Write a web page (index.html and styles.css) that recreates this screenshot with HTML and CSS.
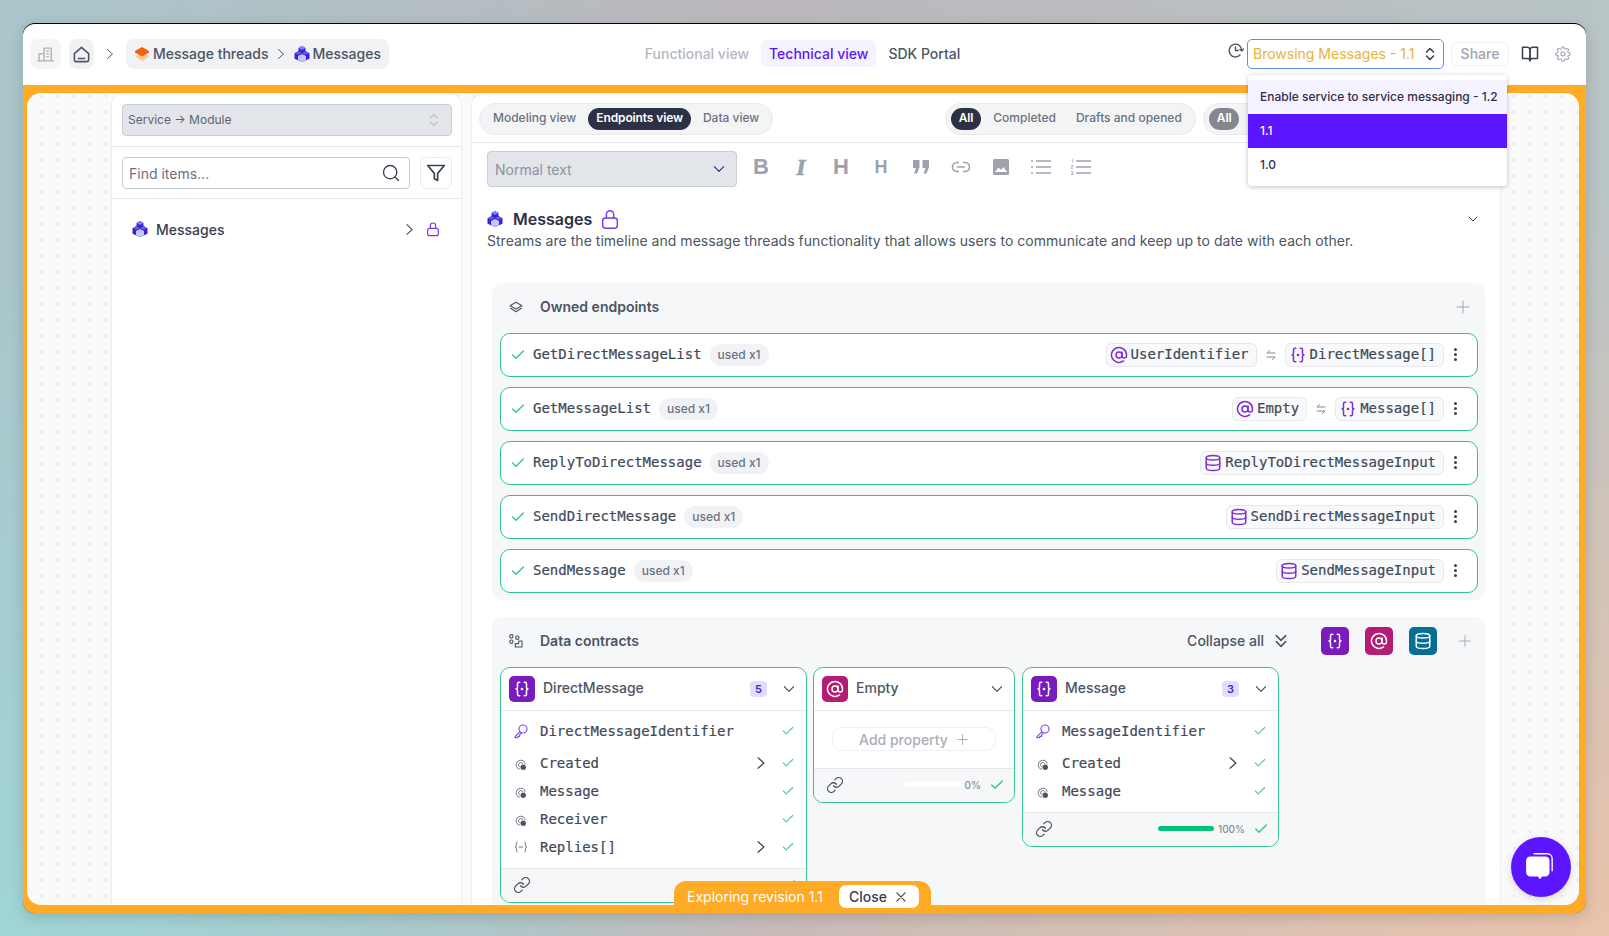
FILE: index.html
```html
<!DOCTYPE html>
<html lang="en">

<head>
    <meta charset="UTF-8">
    <meta name="viewport" content="width=device-width, initial-scale=1.0">
    <title>Messages - Technical view</title>
    <link rel="stylesheet" href="styles.css">
</head>

<body>
    <svg class="sprites" aria-hidden="true">
        <symbol id="i-cube" viewBox="0 0 16 16">
            <polygon points="8,0 11.500,2 11.500,5 15.500,7.300 15.500,12.800 8,16 .5,12.800 .5,7.300 4.500,5 4.500,2" fill="#3d1fd6"/>
            <polygon points="8,0 11.500,2 8,4 4.500,2" fill="#7c83f5"/>
            <polygon points="4.500,5.200 8,7 4.500,8.800 1,7.200" fill="#5f5cf0"/>
            <polygon points="11.500,5.200 15,7.200 11.500,8.800 8,7" fill="#5f5cf0"/>
            <polygon points="8,8 12,10 12,14 8,16 4,14 4,10" fill="#c3c6fb"/>
        </symbol>
        <symbol id="i-layers-o" viewBox="0 0 16 16">
            <polygon points="8,7 15,10.500 8,15 1,10.500" fill="#fdc68a"/>
            <polygon points="8,1 15,5 15,6.500 8,10.500 1,6.500 1,5" fill="#f4610f"/>
        </symbol>
        <symbol id="i-check" viewBox="0 0 24 24"><polyline points="20 6 9 17 4 12"/></symbol>
        <symbol id="i-right" viewBox="0 0 24 24"><polyline points="7 3 17 12 7 21"/></symbol>
        <symbol id="i-down" viewBox="0 0 24 24"><polyline points="4 8 12 16 20 8"/></symbol>
        <symbol id="i-lock" viewBox="0 0 24 24">
            <rect x="4" y="11" width="16" height="11" rx="3"/><path d="M8 11V7a4 4 0 0 1 8 0v4"/>
        </symbol>
        <symbol id="i-at" viewBox="0 0 24 24">
            <circle cx="12" cy="12" r="4"/><path d="M16 8v5a3 3 0 0 0 6 0v-1a10 10 0 1 0-3.920 7.940"/>
        </symbol>
        <symbol id="i-db" viewBox="0 0 24 24">
            <ellipse cx="12" cy="5" rx="9" ry="3"/><path d="M21 12c0 1.660-4 3-9 3s-9-1.340-9-3"/>
            <path d="M3 5v14c0 1.660 4 3 9 3s9-1.340 9-3V5"/>
        </symbol>
        <symbol id="i-braces" viewBox="0 0 24 24">
            <path d="M9 3H8a2 2 0 0 0-2 2v5a2 2 0 0 1-2 2 2 2 0 0 1 2 2v5a2 2 0 0 0 2 2h1"/>
            <path d="M15 3h1a2 2 0 0 1 2 2v5a2 2 0 0 0 2 2 2 2 0 0 0-2 2v5a2 2 0 0 1-2 2h-1"/>
            <circle cx="12" cy="12" r=".8"/>
        </symbol>
        <symbol id="i-link" viewBox="0 0 24 24">
            <path d="M10 13a5 5 0 0 0 7.540.54l3-3a5 5 0 0 0-7.070-7.070l-1.720 1.710"/>
            <path d="M14 11a5 5 0 0 0-7.540-.54l-3 3a5 5 0 0 0 7.070 7.070l1.710-1.710"/>
        </symbol>
        <symbol id="i-key" viewBox="0 0 24 24">
            <circle cx="15" cy="9" r="6"/><path d="M10.500 13 3 20.500V22h3.500l1-2H10v-2.500l2.500-2.500"/>
        </symbol>
        <symbol id="i-attr" viewBox="0 0 16 16">
            <path d="M13.500 6.500A6 6 0 1 0 6.500 13.600" fill="none" stroke="#6b7280" stroke-width="1.300"/>
            <path d="M10.500 6.500A3 3 0 1 0 6.500 10.500" fill="none" stroke="#6b7280" stroke-width="1.300"/>
            <circle cx="11" cy="11" r="3.600" fill="#4b5563"/>
        </symbol>
        <symbol id="i-list" viewBox="0 0 16 16">
            <path d="M4.500 2.500H4a1.300 1.300 0 0 0-1.300 1.300V6.500A1.500 1.500 0 0 1 1.300 8a1.500 1.500 0 0 1 1.400 1.500v2.700A1.300 1.300 0 0 0 4 13.500h.5" fill="none" stroke="#6b7280" stroke-width="1.100"/>
            <path d="M11.500 2.500h.5a1.300 1.300 0 0 1 1.300 1.300V6.500A1.500 1.500 0 0 0 14.700 8a1.500 1.500 0 0 0-1.400 1.500v2.700a1.300 1.300 0 0 1-1.300 1.300h-.5" fill="none" stroke="#6b7280" stroke-width="1.100"/>
            <path d="M5.500 8h5" stroke="#6b7280" stroke-width="1.100"/>
        </symbol>
        <symbol id="i-plus" viewBox="0 0 24 24"><path d="M12 3v18M3 12h18"/></symbol>
        <symbol id="i-swap" viewBox="0 0 24 24"><path d="M20 8H4l5-5M4 16h16l-5 5"/></symbol>
    </svg>

    <div class="window">
        <header class="topbar">
            <div class="crumbs">
                <span class="icon-btn org">
                    <svg class="ic" viewBox="0 0 24 24" width="17" height="17"><path d="M3 21V11h7v10M10 21V3h10v18M1 21h22M14 7h2M14 11h2M14 15h2"/></svg>
                </span>
                <span class="icon-btn home">
                    <svg class="ic" viewBox="0 0 24 24" width="19" height="19"><path d="M3 11 12 3l9 8v8a2 2 0 0 1-2 2H5a2 2 0 0 1-2-2z"/><path d="M8 17h8"/></svg>
                </span>
                <svg class="ic crumb-sep"><use href="#i-right"/></svg>
                <div class="crumb-pill">
                    <svg class="pic" width="16" height="16"><use href="#i-layers-o"/></svg>
                    <span class="crumb-text">Message threads</span>
                    <svg class="ic inner-sep"><use href="#i-right"/></svg>
                    <svg class="pic" width="16" height="16"><use href="#i-cube"/></svg>
                    <span class="crumb-text">Messages</span>
                </div>
            </div>

            <nav class="tabs">
                <span class="tab muted">Functional view</span>
                <span class="tab active">Technical view</span>
                <span class="tab">SDK Portal</span>
            </nav>

            <div class="actions">
                <svg class="ic history" viewBox="0 0 24 24" width="17" height="17"><path d="M21 12a9 9 0 1 0-2.600 6.400"/><path d="M12 7v5h4"/><path d="m23 10-2 2.500-2.500-2"/></svg>
                <div class="version">
                    <div class="version-select">
                        <span class="version-text">Browsing Messages - 1.1</span>
                        <svg class="updown" viewBox="0 0 10 16" width="10" height="16"><path d="M1.500 6 5 2.500 8.500 6M1.500 10 5 13.500 8.500 10"/></svg>
                    </div>
                    <ul class="version-menu">
                        <li class="hovered">Enable service to service messaging - 1.2</li>
                        <li class="selected">1.1</li>
                        <li>1.0</li>
                    </ul>
                </div>
                <span class="share">Share</span>
                <svg class="ic book" viewBox="0 0 24 24" width="18" height="18"><path d="M2 3h6a4 4 0 0 1 4 4v14a3 3 0 0 0-3-3H2z"/><path d="M22 3h-6a4 4 0 0 0-4 4v14a3 3 0 0 1 3-3h7z"/></svg>
                <svg class="ic gear" viewBox="0 0 24 24" width="16" height="16"><circle cx="12" cy="12" r="3"/><path d="M19.400 15a1.650 1.650 0 0 0 .33 1.820l.06.06a2 2 0 0 1 0 2.830 2 2 0 0 1-2.830 0l-.06-.06a1.650 1.650 0 0 0-1.820-.33 1.650 1.650 0 0 0-1 1.510V21a2 2 0 0 1-2 2 2 2 0 0 1-2-2v-.09A1.650 1.650 0 0 0 9 19.400a1.650 1.650 0 0 0-1.820.33l-.06.06a2 2 0 0 1-2.830 0 2 2 0 0 1 0-2.830l.06-.06a1.650 1.650 0 0 0 .33-1.820 1.650 1.650 0 0 0-1.510-1H3a2 2 0 0 1-2-2 2 2 0 0 1 2-2h.09A1.650 1.650 0 0 0 4.600 9a1.650 1.650 0 0 0-.33-1.820l-.06-.06a2 2 0 0 1 0-2.830 2 2 0 0 1 2.830 0l.06.06a1.650 1.650 0 0 0 1.820.33H9a1.650 1.650 0 0 0 1-1.510V3a2 2 0 0 1 2-2 2 2 0 0 1 2 2v.09a1.650 1.650 0 0 0 1 1.510 1.650 1.650 0 0 0 1.820-.33l.06-.06a2 2 0 0 1 2.830 0 2 2 0 0 1 0 2.830l-.06.06a1.650 1.650 0 0 0-.33 1.820V9a1.650 1.650 0 0 0 1.510 1H21a2 2 0 0 1 2 2 2 2 0 0 1-2 2h-.09a1.650 1.650 0 0 0-1.510 1z"/></svg>
            </div>
        </header>

        <div class="frame">
            <div class="canvas">
                <aside class="sidebar">
                    <div class="side-block">
                        <div class="side-select">
                            <span class="side-select-text">Service → Module</span>
                            <svg class="updown faint" viewBox="0 0 10 16" width="10" height="16"><path d="M1.500 6 5 2.500 8.500 6M1.500 10 5 13.500 8.500 10"/></svg>
                        </div>
                    </div>
                    <div class="side-block search-block">
                        <div class="search">
                            <span>Find items...</span>
                            <svg class="ic" viewBox="0 0 24 24" width="20" height="20"><circle cx="11" cy="11" r="8"/><path d="m21 21-4.300-4.300"/></svg>
                        </div>
                        <span class="filter-btn">
                            <svg class="ic" viewBox="0 0 24 24" width="20" height="20"><polygon points="22 3 2 3 10 12.460 10 19 14 21 14 12.460 22 3"/></svg>
                        </span>
                    </div>
                    <div class="side-item">
                        <svg class="pic" width="16" height="16"><use href="#i-cube"/></svg>
                        <span class="side-name">Messages</span>
                        <svg class="ic side-chev"><use href="#i-right"/></svg>
                        <svg class="ic side-lock"><use href="#i-lock"/></svg>
                    </div>
                </aside>

                <main class="main">
                    <div class="view-bar">
                        <div class="seg">
                            <span>Modeling view</span>
                            <span class="on">Endpoints view</span>
                            <span>Data view</span>
                        </div>
                        <div class="seg push">
                            <span class="on">All</span>
                            <span>Completed</span>
                            <span>Drafts and opened</span>
                        </div>
                        <div class="seg">
                            <span class="on grey">All</span>
                            <span>Completed</span>
                            <span>Drafts and opened</span>
                        </div>
                    </div>

                    <div class="toolbar">
                        <div class="format-select">
                            <span>Normal text</span>
                            <svg class="ic"><use href="#i-down"/></svg>
                        </div>
                        <span class="tool tb">B</span>
                        <span class="tool tb slant">I</span>
                        <span class="tool tb">H</span>
                        <span class="tool tb h2">H</span>
                        <span class="tool">
                            <svg viewBox="0 0 18 14" width="18" height="14" fill="#9ca3af"><path d="M1 0h6.500v7L5 13.500H2L4 8H1zM10.500 0H17v7l-2.500 6.500h-3L13.500 8h-3z"/></svg>
                        </span>
                        <span class="tool">
                            <svg class="tool-stroke" viewBox="0 0 20 12" width="20" height="12"><path d="M8 1.500H6a4.500 4.500 0 0 0 0 9h2M12 1.500h2a4.500 4.500 0 0 1 0 9h-2M6 6h8"/></svg>
                        </span>
                        <span class="tool">
                            <svg viewBox="0 0 16 16" width="16" height="16"><rect width="16" height="16" rx="1.500" fill="#9ca3af"/><path d="m2 13 3.500-4.500L8 11l2.500-3 3.500 5z" fill="#fff"/></svg>
                        </span>
                        <span class="tool">
                            <svg class="tool-stroke" viewBox="0 0 20 16" width="20" height="16"><path d="M5 2h15M5 8h15M5 14h15M0 2h2M0 8h2M0 14h2"/></svg>
                        </span>
                        <span class="tool">
                            <svg class="tool-stroke" viewBox="0 0 20 16" width="20" height="16"><path d="M5 2h15M5 8h15M5 14h15"/><path class="tiny" d="M.5 1 1.500.5v3M0 6.500h2v1.500H0v1.500h2M0 12.500h2v1.500H.5M2 14v1.500H0"/></svg>
                        </span>
                    </div>

                    <div class="intro">
                        <div class="intro-head">
                            <svg class="pic" width="16" height="16"><use href="#i-cube"/></svg>
                            <h2>Messages</h2>
                            <svg class="ic intro-lock"><use href="#i-lock"/></svg>
                            <svg class="ic intro-chev"><use href="#i-down"/></svg>
                        </div>
                        <p>Streams are the timeline and message threads functionality that allows users to communicate and keep up to date with each other.</p>
                    </div>

                    <section class="panel">
                        <div class="panel-head">
                            <svg class="ic panel-icon" viewBox="0 0 24 24" width="16" height="16"><path d="m12 5 9 5-9 5-9-5z"/><path d="m4 14 8 5 8-5"/></svg>
                            <h3>Owned endpoints</h3>
                            <svg class="ic panel-plus"><use href="#i-plus"/></svg>
                        </div>
                        <div class="endpoints">
                            <div class="endpoint">
                                <svg class="ic ok"><use href="#i-check"/></svg>
                                <span class="mono">GetDirectMessageList</span>
                                <span class="used">used x1</span>
                                <span class="chip push-chip"><svg class="ic chip-ic"><use href="#i-at"/></svg><span class="mono">UserIdentifier</span></span>
                                <svg class="ic swap"><use href="#i-swap"/></svg>
                                <span class="chip"><svg class="ic chip-ic"><use href="#i-braces"/></svg><span class="mono">DirectMessage[]</span></span>
                                <span class="kebab"><i></i><i></i><i></i></span>
                            </div>
                            <div class="endpoint">
                                <svg class="ic ok"><use href="#i-check"/></svg>
                                <span class="mono">GetMessageList</span>
                                <span class="used">used x1</span>
                                <span class="chip push-chip"><svg class="ic chip-ic"><use href="#i-at"/></svg><span class="mono">Empty</span></span>
                                <svg class="ic swap"><use href="#i-swap"/></svg>
                                <span class="chip"><svg class="ic chip-ic"><use href="#i-braces"/></svg><span class="mono">Message[]</span></span>
                                <span class="kebab"><i></i><i></i><i></i></span>
                            </div>
                            <div class="endpoint">
                                <svg class="ic ok"><use href="#i-check"/></svg>
                                <span class="mono">ReplyToDirectMessage</span>
                                <span class="used">used x1</span>
                                <span class="chip push-chip"><svg class="ic chip-ic"><use href="#i-db"/></svg><span class="mono">ReplyToDirectMessageInput</span></span>
                                <span class="kebab"><i></i><i></i><i></i></span>
                            </div>
                            <div class="endpoint">
                                <svg class="ic ok"><use href="#i-check"/></svg>
                                <span class="mono">SendDirectMessage</span>
                                <span class="used">used x1</span>
                                <span class="chip push-chip"><svg class="ic chip-ic"><use href="#i-db"/></svg><span class="mono">SendDirectMessageInput</span></span>
                                <span class="kebab"><i></i><i></i><i></i></span>
                            </div>
                            <div class="endpoint">
                                <svg class="ic ok"><use href="#i-check"/></svg>
                                <span class="mono">SendMessage</span>
                                <span class="used">used x1</span>
                                <span class="chip push-chip"><svg class="ic chip-ic"><use href="#i-db"/></svg><span class="mono">SendMessageInput</span></span>
                                <span class="kebab"><i></i><i></i><i></i></span>
                            </div>
                        </div>
                    </section>

                    <section class="panel contracts">
                        <div class="panel-head">
                            <svg class="ic panel-icon" viewBox="0 0 24 24" width="16" height="16"><circle cx="5" cy="5" r="2.500"/><circle cx="5" cy="13" r="2.500"/><circle cx="14" cy="7" r="2.500"/><path d="M11 21v-5h5v-4h5v9z"/></svg>
                            <h3>Data contracts</h3>
                            <span class="collapse-all">Collapse all</span>
                            <svg class="ic collapse-ic" viewBox="0 0 24 24" width="16" height="16"><path d="m5 4 7 7 7-7M5 13l7 7 7-7"/></svg>
                            <span class="type-btn purple"><svg class="ic"><use href="#i-braces"/></svg></span>
                            <span class="type-btn magenta"><svg class="ic"><use href="#i-at"/></svg></span>
                            <span class="type-btn teal"><svg class="ic"><use href="#i-db"/></svg></span>
                            <svg class="ic panel-plus small"><use href="#i-plus"/></svg>
                        </div>

                        <div class="cards">
                            <article class="card wide">
                                <div class="card-head">
                                    <span class="type-btn purple"><svg class="ic"><use href="#i-braces"/></svg></span>
                                    <span class="card-title">DirectMessage</span>
                                    <span class="count">5</span>
                                    <svg class="ic card-chev"><use href="#i-down"/></svg>
                                </div>
                                <div class="card-body">
                                    <div class="prop first"><svg class="ic key"><use href="#i-key"/></svg><span class="mono">DirectMessageIdentifier</span><svg class="ic prop-ok"><use href="#i-check"/></svg></div>
                                    <div class="prop"><svg class="attr"><use href="#i-attr"/></svg><span class="mono">Created</span><svg class="ic prop-chev"><use href="#i-right"/></svg><svg class="ic prop-ok"><use href="#i-check"/></svg></div>
                                    <div class="prop"><svg class="attr"><use href="#i-attr"/></svg><span class="mono">Message</span><svg class="ic prop-ok"><use href="#i-check"/></svg></div>
                                    <div class="prop"><svg class="attr"><use href="#i-attr"/></svg><span class="mono">Receiver</span><svg class="ic prop-ok"><use href="#i-check"/></svg></div>
                                    <div class="prop"><svg class="list-ic"><use href="#i-list"/></svg><span class="mono">Replies[]</span><svg class="ic prop-chev"><use href="#i-right"/></svg><svg class="ic prop-ok"><use href="#i-check"/></svg></div>
                                </div>
                                <div class="card-foot">
                                    <svg class="ic foot-link"><use href="#i-link"/></svg>
                                    <svg class="ic foot-ok"><use href="#i-check"/></svg>
                                </div>
                            </article>

                            <article class="card narrow">
                                <div class="card-head">
                                    <span class="type-btn magenta"><svg class="ic"><use href="#i-at"/></svg></span>
                                    <span class="card-title">Empty</span>
                                    <svg class="ic card-chev"><use href="#i-down"/></svg>
                                </div>
                                <div class="card-body empty">
                                    <div class="add-prop">Add property <svg class="ic"><use href="#i-plus"/></svg></div>
                                </div>
                                <div class="card-foot">
                                    <svg class="ic foot-link"><use href="#i-link"/></svg>
                                    <span class="track"><span class="fill" style="width: 0%"></span></span>
                                    <span class="pct">0%</span>
                                    <svg class="ic foot-ok"><use href="#i-check"/></svg>
                                </div>
                            </article>

                            <article class="card medium">
                                <div class="card-head">
                                    <span class="type-btn purple"><svg class="ic"><use href="#i-braces"/></svg></span>
                                    <span class="card-title">Message</span>
                                    <span class="count">3</span>
                                    <svg class="ic card-chev"><use href="#i-down"/></svg>
                                </div>
                                <div class="card-body">
                                    <div class="prop first"><svg class="ic key"><use href="#i-key"/></svg><span class="mono">MessageIdentifier</span><svg class="ic prop-ok"><use href="#i-check"/></svg></div>
                                    <div class="prop"><svg class="attr"><use href="#i-attr"/></svg><span class="mono">Created</span><svg class="ic prop-chev"><use href="#i-right"/></svg><svg class="ic prop-ok"><use href="#i-check"/></svg></div>
                                    <div class="prop"><svg class="attr"><use href="#i-attr"/></svg><span class="mono">Message</span><svg class="ic prop-ok"><use href="#i-check"/></svg></div>
                                </div>
                                <div class="card-foot">
                                    <svg class="ic foot-link"><use href="#i-link"/></svg>
                                    <span class="track"><span class="fill" style="width: 100%"></span></span>
                                    <span class="pct">100%</span>
                                    <svg class="ic foot-ok"><use href="#i-check"/></svg>
                                </div>
                            </article>
                        </div>
                    </section>
                </main>
            </div>
        </div>

        <div class="revision-banner">
            <span class="banner-text">Exploring revision 1.1</span>
            <span class="close-btn">Close
                <svg class="ic" viewBox="0 0 24 24" width="14" height="14"><path d="M5 5l14 14M19 5 5 19"/></svg>
            </span>
        </div>

        <div class="chat-btn">
            <svg viewBox="0 0 32 32" width="34" height="34"><path d="M9 3.500h13a4.500 4.500 0 0 1 4.500 4.500v12" fill="none" stroke="#fff" stroke-width="1.300"/><path d="M6 6h14a4 4 0 0 1 4 4v11a4 4 0 0 1-4 4h-3l-2 2.500-2-2.500H6a4 4 0 0 1-4-4V10a4 4 0 0 1 4-4z" fill="#fff"/></svg>
        </div>
    </div>
</body>

</html>
```

FILE: styles.css
```css
* {
    box-sizing: border-box;
}

html,
body {
    height: 100%;
}

body {
    margin: 0;
    padding: 23px;
    overflow: hidden;
    font-family: Inter, "Noto Sans", sans-serif;
    font-size: 14px;
    color: #374151;
    background:
        radial-gradient(ellipse 70% 80% at 100% 100%, #eac3ab 0, rgba(234, 195, 171, 0) 100%),
        radial-gradient(ellipse 50% 70% at 0 100%, #a1d5d5 0, rgba(161, 213, 213, 0) 100%),
        linear-gradient(90deg, #a9c6cb 0, #bcb7bc 48%, #b8c4c6 100%);
}

.sprites {
    display: none;
}

h2,
h3,
p,
ul {
    margin: 0;
    padding: 0;
}

.ic {
    fill: none;
    stroke: currentColor;
    stroke-width: 2;
    stroke-linecap: round;
    stroke-linejoin: round;
    flex: none;
}

.pic {
    flex: none;
}

.mono {
    font-family: "DejaVu Sans Mono", "Liberation Mono", monospace;
    font-size: 14px;
    color: #414a59;
    white-space: nowrap;
    -webkit-text-stroke: 0.2px currentColor;
}

.window {
    position: relative;
    width: 1563px;
    height: 890px;
    display: flex;
    flex-direction: column;
    border-top: 1px solid #000;
    border-radius: 12px;
    background: #555;
    box-shadow: 0 4px 14px rgba(0, 0, 0, 0.15);
}

/* top bar */
.topbar {
    height: 61px;
    flex: none;
    display: grid;
    grid-template-columns: 1fr auto 1fr;
    align-items: center;
    padding: 0 15px 1px 7px;
    background: #fff;
    border-radius: 12px 12px 0 0;
}

.crumbs {
    display: flex;
    align-items: center;
}

.icon-btn {
    height: 30px;
    display: flex;
    align-items: center;
    justify-content: center;
    border-radius: 8px;
}

.icon-btn.org {
    width: 31px;
    background: #f5f5f6;
    color: #b0b3b8;
}

.icon-btn.home {
    width: 25px;
    margin-left: 8px;
    background: #f0f1f4;
    color: #4b5563;
}

.crumb-sep {
    width: 12px;
    height: 12px;
    margin: 0 10px 0 10px;
    color: #4b5563;
}

.crumb-pill {
    height: 30px;
    display: flex;
    align-items: center;
    gap: 3px;
    padding: 0 8px;
    background: #f1f2f5;
    border-radius: 8px;
    color: #4b5563;
    font-weight: 500;
}

.crumb-text,
.version-text {
    margin-bottom: 2px;
}

.inner-sep {
    width: 12px;
    height: 12px;
    margin: 0 4px 0 3px;
    color: #4b5563;
}

.tabs {
    display: flex;
    gap: 4px;
    margin: 0 0 2px 4px;
}

.tab {
    padding: 5px 8px;
    border-radius: 6px;
    font-weight: 500;
    color: #4b5563;
}

.tab.muted {
    color: #b4b8c0;
}

.tab.active {
    background: #f5f3ff;
    color: #5b16ff;
}

.actions {
    display: flex;
    align-items: center;
    justify-content: flex-end;
}

.history {
    margin: -7px 3px 0 0;
    color: #4b5563;
}

.version {
    position: relative;
}

.version-select {
    width: 197px;
    height: 30px;
    display: flex;
    align-items: center;
    justify-content: space-between;
    padding: 0 8px 0 5px;
    border: 1.5px solid #5b8def;
    border-radius: 5px;
    color: #e8b33a;
}

.updown {
    fill: none;
    stroke: #374151;
    stroke-width: 1.6;
    stroke-linecap: round;
    stroke-linejoin: round;
    flex: none;
}

.updown.faint {
    stroke: #c2c6cd;
}

.version-menu {
    position: absolute;
    top: 36px;
    left: 1px;
    z-index: 5;
    width: 259px;
    padding: 5px 0 4px;
    list-style: none;
    background: #fff;
    border-radius: 4px;
    box-shadow: 0 1px 5px rgba(0, 0, 0, 0.25);
    font-size: 12px;
    font-weight: 500;
    color: #312e4d;
}

.version-menu li {
    height: 34px;
    padding: 0 12px 2px;
    display: flex;
    align-items: center;
    white-space: nowrap;
}

.version-menu .hovered {
    background: #f5f3ff;
}

.version-menu .selected {
    background: #5b16ff;
    color: #fff;
}

.share {
    width: 58px;
    height: 24px;
    margin-left: 7px;
    display: flex;
    align-items: center;
    justify-content: center;
    padding-bottom: 1px;
    border: 1px solid #f0f1f3;
    border-radius: 6px;
    color: #a0a5ae;
    font-weight: 500;
}

.book {
    margin-left: 12px;
    color: #374151;
}

.gear {
    margin-left: 16px;
    color: #9ca3af;
    stroke-width: 1.6;
}

/* orange frame and the dotted canvas */
.frame {
    flex: 1;
    min-height: 0;
    border-style: solid;
    border-color: #ffab26;
    border-width: 8px 7px 8px 4px;
    border-radius: 0 0 12px 12px;
    background: #ffab26;
}

.canvas {
    height: 100%;
    display: flex;
    gap: 9px;
    padding: 1px 78px 0 84px;
    overflow: hidden;
    border-radius: 14px;
    background-color: #fafafa;
    background-image: radial-gradient(#e2e2e2 0.8px, transparent 1px);
    background-size: 16px 16px;
    background-position: 7px -5px;
}

.sidebar {
    width: 351px;
    flex: none;
    background: #fff;
    border: 1px solid #eceef1;
    border-bottom: 0;
    border-radius: 10px 10px 0 0;
}

.side-block {
    height: 52px;
    padding: 9px 9px 9px 10px;
    border-bottom: 1px solid #e5e7eb;
}

.search-block {
    display: flex;
    gap: 10px;
    padding-top: 10px;
}

.side-select {
    height: 32px;
    display: flex;
    align-items: center;
    justify-content: space-between;
    padding: 0 12px 0 5px;
    background: #e2e5ea;
    border: 1.5px solid #c9ced8;
    border-radius: 4px;
    font-size: 12px;
    color: #5b6472;
}

.side-select-text {
    margin-bottom: 2px;
}

.search {
    flex: 1;
    height: 32px;
    display: flex;
    align-items: center;
    justify-content: space-between;
    padding: 0 8px 0 6px;
    border: 1.5px solid #c5c9d4;
    border-radius: 4px;
    color: #6b7280;
}

.search .ic {
    color: #374151;
    stroke-width: 1.6;
}

.filter-btn {
    width: 32px;
    height: 32px;
    display: flex;
    align-items: center;
    justify-content: center;
    border: 1px solid #e9ebef;
    border-radius: 6px;
    color: #374151;
}

.side-item {
    display: flex;
    align-items: center;
    margin-top: 21px;
    padding: 0 20px 0 20px;
    height: 18px;
}

.side-name {
    flex: 1;
    margin-left: 8px;
    color: #374151;
    font-weight: 500;
}

.side-chev {
    width: 13px;
    height: 13px;
    color: #4b5563;
}

.side-lock {
    width: 16px;
    height: 16px;
    margin-left: 9px;
    color: #7c3aed;
    stroke-width: 1.800;
}

/* main column */
.main {
    width: 1030px;
    flex: none;
    position: relative;
    overflow: hidden;
    background: #fff;
    border: 1px solid #eceef1;
    border-bottom: 0;
    border-radius: 10px 10px 0 0;
}

.view-bar {
    height: 48px;
    display: flex;
    align-items: center;
    gap: 7px;
    padding: 0 46px 0 7px;
    border-bottom: 1px solid #e5e7eb;
}

.seg {
    height: 32px;
    display: flex;
    align-items: center;
    gap: 4px;
    padding: 0 5px;
    background: #f3f4f6;
    border: 1px solid #e9eaee;
    border-radius: 16px;
    font-size: 12px;
    font-weight: 500;
    color: #6b7280;
    white-space: nowrap;
}

.seg span {
    height: 22px;
    display: flex;
    align-items: center;
    padding: 0 8px 2px;
    border-radius: 11px;
}

.seg .on {
    background: #2d3145;
    color: #fff;
    font-weight: 600;
    letter-spacing: -0.12px;
}

.seg .on.grey {
    background: #85878f;
}

.seg.push {
    margin-left: auto;
}

.toolbar {
    display: flex;
    align-items: center;
    height: 36px;
    margin-top: 8px;
    padding-left: 15px;
}

.format-select {
    width: 250px;
    height: 36px;
    display: flex;
    align-items: center;
    justify-content: space-between;
    padding: 0 10px 0 7px;
    margin-right: 4px;
    background: #e2e5ea;
    border: 1.5px solid #c9ced8;
    border-radius: 4px;
    color: #8d939e;
}

.format-select .ic {
    width: 14px;
    height: 14px;
    color: #312e81;
}

.tool {
    width: 40px;
    display: flex;
    align-items: center;
    justify-content: center;
    margin-top: -5px;
}

.tool-stroke {
    fill: none;
    stroke: #9ca3af;
    stroke-width: 1.600;
}

.tool-stroke .tiny {
    stroke-width: 0.700;
}

.tb {
    font-family: "Liberation Sans", Arial, sans-serif;
    font-weight: 700;
    font-size: 22px;
    line-height: 24px;
    color: #9ca3af;
}

.slant {
    font-family: "Liberation Serif", serif;
    font-style: italic;
    font-size: 24px;
    -webkit-text-stroke: 0.7px currentColor;
}

.h2 {
    font-size: 18px;
}

.intro {
    padding: 0 21px 0 15px;
    margin-top: 20px;
}

.intro-head {
    height: 24px;
    display: flex;
    align-items: center;
}

.intro-head h2 {
    margin-left: 10px;
    font-size: 16px;
    font-weight: 600;
    color: #2d3145;
}

.intro-lock {
    width: 22px;
    height: 22px;
    margin-left: 7px;
    color: #7c3aed;
    stroke-width: 1.600;
}

.intro-chev {
    width: 12px;
    height: 12px;
    margin-left: auto;
    color: #374151;
}

.intro p {
    line-height: 20px;
    color: #4b5563;
    letter-spacing: 0.03px;
}

.panel {
    margin: 32px 15px 0 20px;
    padding: 0 7px 7px 8px;
    background: #f6f7f9;
    border-radius: 10px;
}

.panel.contracts {
    margin-top: 17px;
}

.panel-head {
    height: 50px;
    display: flex;
    align-items: center;
    padding: 0 7px 3px 8px;
}

.contracts .panel-head {
    padding-right: 0;
}

.panel-head h3 {
    margin-left: 16px;
    font-size: 14px;
    font-weight: 600;
    color: #4b5563;
}

.panel-icon {
    color: #4b5563;
    stroke-width: 1.700;
}

.panel-plus {
    width: 16px;
    height: 16px;
    margin-left: auto;
    color: #9ca3af;
    stroke-width: 1.500;
}

.panel-plus.small {
    width: 14px;
    height: 14px;
    margin-left: 21px;
    margin-right: 6px;
}

.endpoints {
    display: flex;
    flex-direction: column;
    gap: 10px;
}

.endpoint {
    height: 44px;
    display: flex;
    align-items: center;
    padding: 0 20px 1px 9px;
    background: #fff;
    border: 1.5px solid #2fc48d;
    border-radius: 10px;
}

.endpoint .mono {
    margin-bottom: 2px;
}

.ok {
    width: 16px;
    height: 16px;
    margin-right: 7px;
    color: #2fc48d;
}

.used {
    height: 22px;
    display: flex;
    align-items: center;
    margin-left: 8px;
    padding: 0 8px;
    background: #f1f2f5;
    border-radius: 11px;
    font-size: 12px;
    font-weight: 500;
    color: #6b7280;
}

.chip {
    height: 24px;
    display: flex;
    align-items: center;
    gap: 3px;
    padding: 0 7px 0 3px;
    background: #f8f9fa;
    border: 1px solid #e7e9ed;
    border-radius: 6px;
}

.push-chip {
    margin-left: auto;
}

.chip-ic {
    width: 18px;
    height: 18px;
    color: #7e2fd6;
}

.swap {
    width: 12px;
    height: 12px;
    margin: 0 8px;
    color: #6b7280;
    stroke-width: 1.700;
}

.kebab {
    width: 3px;
    margin-left: 10px;
    display: flex;
    flex-direction: column;
    gap: 2px;
}

.kebab i {
    width: 3px;
    height: 3px;
    border-radius: 50%;
    background: #374151;
}

.collapse-all {
    margin-left: auto;
    font-weight: 500;
    color: #4b5563;
}

.collapse-ic {
    margin: 0 32px 0 9px;
    color: #4b5563;
    stroke-width: 2.400;
}

.type-btn {
    width: 28px;
    height: 28px;
    flex: none;
    display: flex;
    align-items: center;
    justify-content: center;
    border-radius: 5px;
    color: #fff;
}

.panel-head .type-btn + .type-btn {
    margin-left: 16px;
}

.type-btn .ic {
    width: 18px;
    height: 18px;
    stroke-width: 2;
}

.type-btn.purple {
    background: #7a1bbd;
}

.type-btn.magenta {
    background: #b51d75;
}

.type-btn.teal {
    background: #056f96;
}

.cards {
    display: flex;
    align-items: flex-start;
    gap: 6px;
    height: 236px;
}

.card {
    background: #fff;
    border: 1.5px solid #36c490;
    border-radius: 10px;
    overflow: hidden;
}

.card.wide {
    width: 307px;
    height: 236px;
}

.card.narrow {
    width: 202px;
}

.card.medium {
    width: 257px;
    margin-left: 1px;
}

.card-head {
    height: 43px;
    display: flex;
    align-items: center;
    padding: 0 10px 0 8px;
    border-bottom: 1.500px solid #e5e7eb;
}

.card-head .type-btn {
    width: 26px;
    height: 26px;
}

.card-title {
    flex: 1;
    margin: 0 0 4px 8px;
    font-weight: 500;
    color: #4b5563;
}

.count {
    width: 17px;
    height: 16px;
    display: flex;
    align-items: center;
    justify-content: center;
    margin-right: 15px;
    background: #e4dcff;
    border-radius: 4px;
    font-size: 11px;
    font-weight: 600;
    color: #4a1fd1;
}

.card-chev {
    width: 14px;
    height: 14px;
    color: #374151;
    stroke-width: 1.800;
}

.card-body {
    padding: 6px 0 7px;
}

.card-body.empty {
    padding: 16px 18px 17px;
}

.prop {
    height: 28px;
    display: flex;
    align-items: center;
    padding: 0 11px 0 13px;
}

.prop.first {
    margin-bottom: 4px;
}

.prop .mono {
    flex: 1;
    margin-left: 12px;
}

.key {
    width: 16px;
    height: 16px;
    margin: 0 -1px;
    color: #7c4dff;
    stroke-width: 1.800;
}

.attr {
    width: 12px;
    height: 12px;
    margin: 3px 1px 0;
    flex: none;
}

.list-ic {
    width: 14px;
    height: 14px;
    flex: none;
}

.prop-chev {
    width: 14px;
    height: 14px;
    margin-right: 13px;
    color: #374151;
}

.prop-ok {
    width: 14px;
    height: 14px;
    color: #45d09c;
}

.add-prop {
    height: 24px;
    display: flex;
    align-items: center;
    justify-content: center;
    gap: 8px;
    border: 1px solid #eef0f3;
    border-radius: 10px;
    font-weight: 500;
    color: #a9aeb7;
}

.add-prop .ic {
    width: 13px;
    height: 13px;
    stroke-width: 1.800;
}

.card-foot {
    height: 34px;
    display: flex;
    align-items: center;
    padding: 0 9px 2px 12px;
    background: #f6f7f9;
    border-top: 1.500px solid #e5e7eb;
}

.foot-link {
    width: 18px;
    height: 18px;
    margin-right: auto;
    color: #4b5563;
    stroke-width: 1.700;
}

.track {
    width: 56px;
    height: 5px;
    background: #fff;
    border-radius: 3px;
    overflow: hidden;
}

.fill {
    display: block;
    height: 100%;
    background: #00c47c;
}

.pct {
    margin: 0 8px 0 4px;
    font-size: 10px;
    font-weight: 500;
    color: #8a909a;
}

.foot-ok {
    width: 16px;
    height: 16px;
    color: #2fc48d;
}

/* floating pieces */
.revision-banner {
    position: absolute;
    left: 651px;
    bottom: 0;
    width: 257px;
    height: 32px;
    display: flex;
    align-items: flex-start;
    gap: 16px;
    padding: 4px 0 0 13px;
    background: #ffab26;
    border-radius: 12px 12px 0 0;
    color: #fff;
}

.banner-text {
    line-height: 23px;
}

.close-btn {
    height: 23px;
    display: flex;
    align-items: center;
    gap: 7px;
    padding: 0 11px 0 10px;
    background: #fff;
    border-radius: 7px;
    font-weight: 500;
    color: #374151;
}

.chat-btn {
    position: absolute;
    left: 1488px;
    top: 813px;
    width: 60px;
    height: 60px;
    display: flex;
    align-items: center;
    justify-content: center;
    background: #5b16ff;
    border-radius: 50%;
    box-shadow: 0 2px 8px rgba(0, 0, 0, 0.15);
}
```
